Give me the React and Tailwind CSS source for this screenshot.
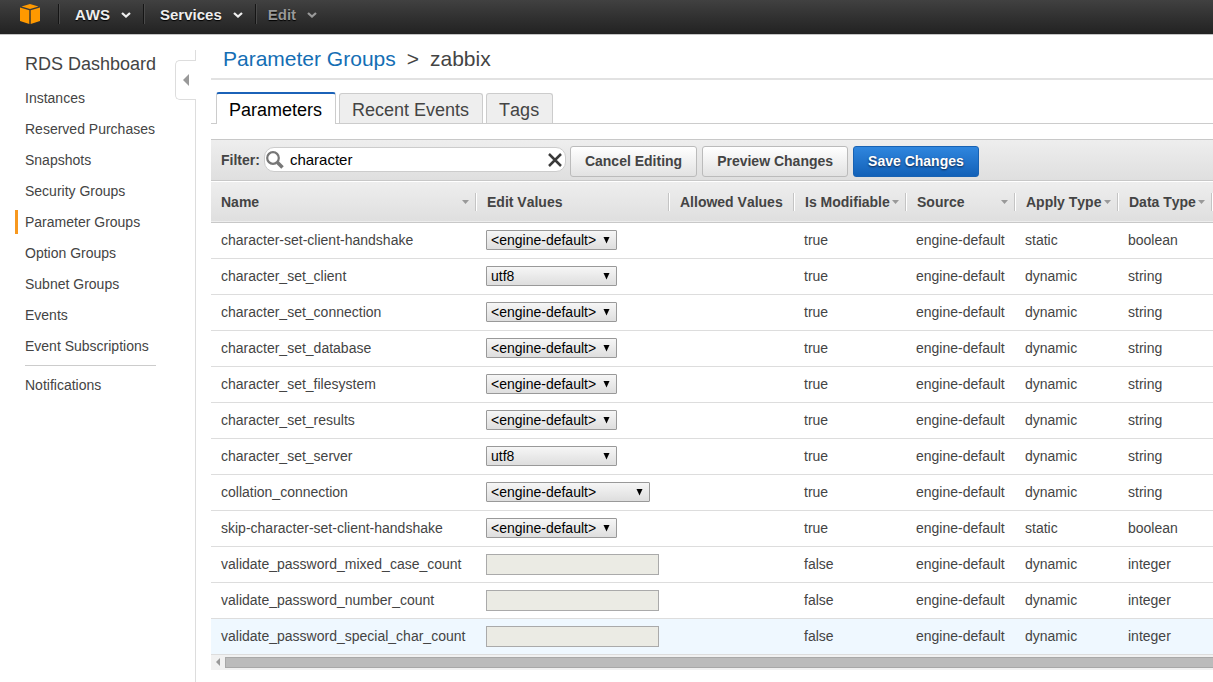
import { useState } from 'react';

const NAV_LINKS = [
  'Instances',
  'Reserved Purchases',
  'Snapshots',
  'Security Groups',
  'Parameter Groups',
  'Option Groups',
  'Subnet Groups',
  'Events',
  'Event Subscriptions',
];

const TABS = ['Parameters', 'Recent Events', 'Tags'];

const COLUMNS = [
  { label: 'Name', width: 'w-[266px]', sortable: true },
  { label: 'Edit Values', width: 'w-[193px]' },
  { label: 'Allowed Values', width: 'w-[125px]' },
  { label: 'Is Modifiable', width: 'w-[112px]', sortable: true },
  { label: 'Source', width: 'w-[109px]', sortable: true },
  { label: 'Apply Type', width: 'w-[103px]', sortable: true },
  { label: 'Data Type', width: '', sortable: true },
];

const DEFAULT = '<engine-default>';

const PARAMETERS = [
  { name: 'character-set-client-handshake', value: DEFAULT, modifiable: true, apply: 'static', type: 'boolean' },
  { name: 'character_set_client', value: 'utf8', modifiable: true, apply: 'dynamic', type: 'string' },
  { name: 'character_set_connection', value: DEFAULT, modifiable: true, apply: 'dynamic', type: 'string' },
  { name: 'character_set_database', value: DEFAULT, modifiable: true, apply: 'dynamic', type: 'string' },
  { name: 'character_set_filesystem', value: DEFAULT, modifiable: true, apply: 'dynamic', type: 'string' },
  { name: 'character_set_results', value: DEFAULT, modifiable: true, apply: 'dynamic', type: 'string' },
  { name: 'character_set_server', value: 'utf8', modifiable: true, apply: 'dynamic', type: 'string' },
  { name: 'collation_connection', value: DEFAULT, modifiable: true, apply: 'dynamic', type: 'string', wide: true },
  { name: 'skip-character-set-client-handshake', value: DEFAULT, modifiable: true, apply: 'static', type: 'boolean' },
  { name: 'validate_password_mixed_case_count', modifiable: false, apply: 'dynamic', type: 'integer' },
  { name: 'validate_password_number_count', modifiable: false, apply: 'dynamic', type: 'integer' },
  { name: 'validate_password_special_char_count', modifiable: false, apply: 'dynamic', type: 'integer', highlighted: true },
];

function Logo() {
  return (
    <svg width="20" height="20" viewBox="0 0 20 20" fill="#f90" aria-hidden="true">
      <path d="M10 0 18.5 2.4 10 5 1.5 2.4Z" />
      <path d="M0 3.6 9.3 6.3V20L0 17Z" />
      <path d="M20 3.6 10.7 6.3V20L20 17Z" />
    </svg>
  );
}

function Chevron() {
  return (
    <svg width="10" height="6" viewBox="0 0 10 6" fill="none" stroke="currentColor" strokeWidth="2.3" aria-hidden="true">
      <path d="M1 1 5 4.5 9 1" />
    </svg>
  );
}

function TopMenu({ label, muted }) {
  return (
    <button
      type="button"
      className={`flex h-5 items-center gap-[11px] border-l border-[#151515] pt-0.5 pr-3 text-[15px] leading-5 font-bold shadow-[inset_1px_0_0_#4a4a4a] [text-shadow:0_1px_1px_#000] ${
        muted ? 'pl-3 text-[#999]' : 'pl-4 text-[#eee]'
      }`}
    >
      {label}
      <Chevron />
    </button>
  );
}

function TopBar() {
  return (
    <header className="flex h-[35px] items-start border-b border-[#c4c4c4] bg-linear-to-b from-[#414141] to-[#222] pt-1 pl-5">
      <a href="#home" aria-label="Home" className="mr-[18px]">
        <Logo />
      </a>
      <TopMenu label="AWS" />
      <TopMenu label="Services" />
      <TopMenu label="Edit" muted />
    </header>
  );
}

function SideLink({ label, active }) {
  return (
    <a
      href="#nav"
      className={`block border-l-3 pl-[7px] text-sm leading-6 whitespace-nowrap ${
        active ? 'border-[#f7981f]' : 'border-transparent'
      }`}
    >
      {label}
    </a>
  );
}

function Sidebar() {
  return (
    <nav className="flex w-[160px] shrink-0 flex-col gap-[7px] pt-[17px] pl-[15px]">
      <a href="#dashboard" className="mb-[3px] pl-[10px] text-lg leading-6 whitespace-nowrap">
        RDS Dashboard
      </a>
      {NAV_LINKS.map((label) => (
        <SideLink key={label} label={label} active={label === 'Parameter Groups'} />
      ))}
      <hr className="mr-1 ml-[10px] border-[#ccc]" />
      <SideLink label="Notifications" />
    </nav>
  );
}

function CollapseHandle() {
  return (
    <div className="flex w-9 shrink-0 flex-col pt-[15px]">
      <div className="h-[10px] border-r border-[#ddd]" />
      <button
        type="button"
        aria-label="Collapse sidebar"
        className="ml-[15px] flex h-10 items-center rounded-l-[5px] border-y border-l border-[#ddd] pl-[7px]"
      >
        <svg width="6" height="12" viewBox="0 0 6 12" fill="#999" aria-hidden="true">
          <path d="M6 0V12L0 6Z" />
        </svg>
      </button>
      <div className="grow border-r border-[#ddd]" />
    </div>
  );
}

function Tabs({ active, onChange }) {
  return (
    <div role="tablist" className="mt-3 flex h-8 items-end gap-[3px] border-b border-[#ccc] pl-[5px]">
      {TABS.map((tab) => (
        <button
          key={tab}
          type="button"
          role="tab"
          aria-selected={tab === active}
          onClick={() => onChange(tab)}
          className={`rounded-t-[3px] border-x border-[#ccc] pt-0.5 pr-[13px] pl-3 text-lg leading-7 ${
            tab === active
              ? '-mb-px h-8 border-t-2 border-t-[#1b62b8] bg-white text-black'
              : 'h-[30px] border-t bg-[#eee]'
          }`}
        >
          {tab}
        </button>
      ))}
    </div>
  );
}

function ToolButton({ children, primary }) {
  return (
    <button
      type="button"
      className={`h-[31px] rounded-[3px] border px-[14px] pb-0.5 text-sm font-bold whitespace-nowrap ${
        primary
          ? 'border-[#1862b3] bg-linear-to-b from-[#2f86de] to-[#1261b8] text-white [text-shadow:0_1px_2px_#124]'
          : 'border-[#bbb] bg-linear-to-b from-white to-[#e2e2e2]'
      }`}
    >
      {children}
    </button>
  );
}

function Toolbar({ filter, onFilter }) {
  return (
    <div className="flex h-[42px] items-start border-y border-[#c8c8c8] bg-linear-to-b from-[#eee] to-[#dfdfdf] pt-[6px] pl-[10px]">
      <label htmlFor="filter" className="mr-1 text-sm leading-7 font-bold">
        Filter:
      </label>
      <div className="mt-px flex h-[25px] w-[302px] items-center rounded-[10px] border border-[#ccc] bg-white pr-[3px] pl-px">
        <svg width="18" height="18" viewBox="0 0 18 18" fill="none" stroke="#777" className="shrink-0" aria-hidden="true">
          <circle cx="7" cy="7" r="5.8" strokeWidth="2.2" />
          <path d="M11.5 11.5 16.5 16.5" strokeWidth="3.6" />
        </svg>
        <input
          id="filter"
          type="text"
          value={filter}
          onChange={(e) => onFilter(e.target.value)}
          className="min-w-0 grow pl-[6px] text-[15px] leading-5 text-black outline-none"
        />
        <button type="button" aria-label="Clear filter" onClick={() => onFilter('')}>
          <svg width="14" height="14" viewBox="0 0 14 14" fill="none" stroke="#3a3a3a" strokeWidth="2.5" aria-hidden="true">
            <path d="M1 1 13 13M13 1 1 13" />
          </svg>
        </button>
      </div>
      <div className="ml-1 flex gap-[5px]">
        <ToolButton>Cancel Editing</ToolButton>
        <ToolButton>Preview Changes</ToolButton>
        <ToolButton primary>Save Changes</ToolButton>
      </div>
    </div>
  );
}

function HeaderCell({ label, width, sortable }) {
  return (
    <th scope="col" className={`${width} p-0`}>
      <div className="mr-px flex h-[18px] items-center justify-between border-r border-[#c4c4c4] pr-[6px] pl-[10px] whitespace-nowrap shadow-[1px_0_0_#fff]">
        {label}
        {sortable && (
          <svg width="7" height="4" viewBox="0 0 7 4" fill="#999" className="shrink-0" aria-hidden="true">
            <path d="M0 0H7L3.5 4Z" />
          </svg>
        )}
      </div>
    </th>
  );
}

function ValueEditor({ param }) {
  const [value, setValue] = useState(param.value);

  if (!param.modifiable) {
    return (
      <input
        type="text"
        disabled
        aria-label={param.name}
        className="block h-[21px] w-[173px] border border-[#aaa] bg-[#ebebe4]"
      />
    );
  }

  return (
    <div className={`relative ${param.wide ? 'w-[164px]' : 'w-[131px]'}`}>
      <select
        aria-label={param.name}
        value={value}
        onChange={(e) => setValue(e.target.value)}
        className="block h-5 w-full appearance-none rounded-[1px] border border-[#999] bg-linear-to-b from-[#f6f6f6] to-[#dedede] pl-1 text-sm leading-[18px] text-black"
      >
        <option>{DEFAULT}</option>
        <option>utf8</option>
      </select>
      <svg
        width="7"
        height="7"
        viewBox="0 0 7 7"
        className="pointer-events-none absolute top-[7px] right-[7px]"
        aria-hidden="true"
      >
        <path d="M0.5 0H6.5L3.5 6.5Z" />
      </svg>
    </div>
  );
}

function ParameterTable() {
  return (
    <table className="w-full min-w-[1002px] table-fixed border-collapse text-left text-sm">
      <thead>
        <tr className="h-10 border-b border-[#c8c8c8] bg-linear-to-b from-[#eee] to-[#dfdfdf]">
          {COLUMNS.map((col) => (
            <HeaderCell key={col.label} {...col} />
          ))}
        </tr>
      </thead>
      <tbody>
        {PARAMETERS.map((param) => (
          <tr
            key={param.name}
            className={`h-9 border-b border-[#ddd] whitespace-nowrap [&>td]:pl-[9px] ${
              param.highlighted ? 'bg-[#eff8ff]' : ''
            }`}
          >
            <th scope="row" className="pl-[10px] font-normal">{param.name}</th>
            <td>
              <ValueEditor param={param} />
            </td>
            <td />
            <td>{String(param.modifiable)}</td>
            <td>engine-default</td>
            <td>{param.apply}</td>
            <td>{param.type}</td>
          </tr>
        ))}
      </tbody>
    </table>
  );
}

function ScrollTrack() {
  return (
    <div className="flex h-[15px] items-center bg-[#f1f1f1] pl-[5px]" aria-hidden="true">
      <svg width="4" height="8" viewBox="0 0 4 8" fill="#999" className="mr-[5px]">
        <path d="M4 0V8L0 4Z" />
      </svg>
      <div className="h-[11px] grow border-y border-l border-[#a8a8a8] bg-[#bbb]" />
    </div>
  );
}

export default function App() {
  const [tab, setTab] = useState('Parameters');
  const [filter, setFilter] = useState('character');

  return (
    <div className="flex min-h-screen flex-col bg-white font-['Liberation_Sans',Arial,sans-serif] text-[#444] [font-kerning:none]">
      <TopBar />
      <div className="flex grow">
        <Sidebar />
        <CollapseHandle />
        <main className="ml-[15px] min-w-0 grow overflow-hidden">
          <h1 className="flex h-[45px] items-center gap-[11px] border-b-2 border-[#e2e2e2] pt-1 pl-3 text-[21px]">
            <a href="#groups" className="text-[#146eb4]">Parameter Groups</a>
            <span>&gt;</span>
            <span>zabbix</span>
          </h1>
          <Tabs active={tab} onChange={setTab} />
          <section className="mt-[15px]">
            <Toolbar filter={filter} onFilter={setFilter} />
            <div className="mt-px">
              <ParameterTable />
            </div>
            <ScrollTrack />
          </section>
        </main>
      </div>
    </div>
  );
}
